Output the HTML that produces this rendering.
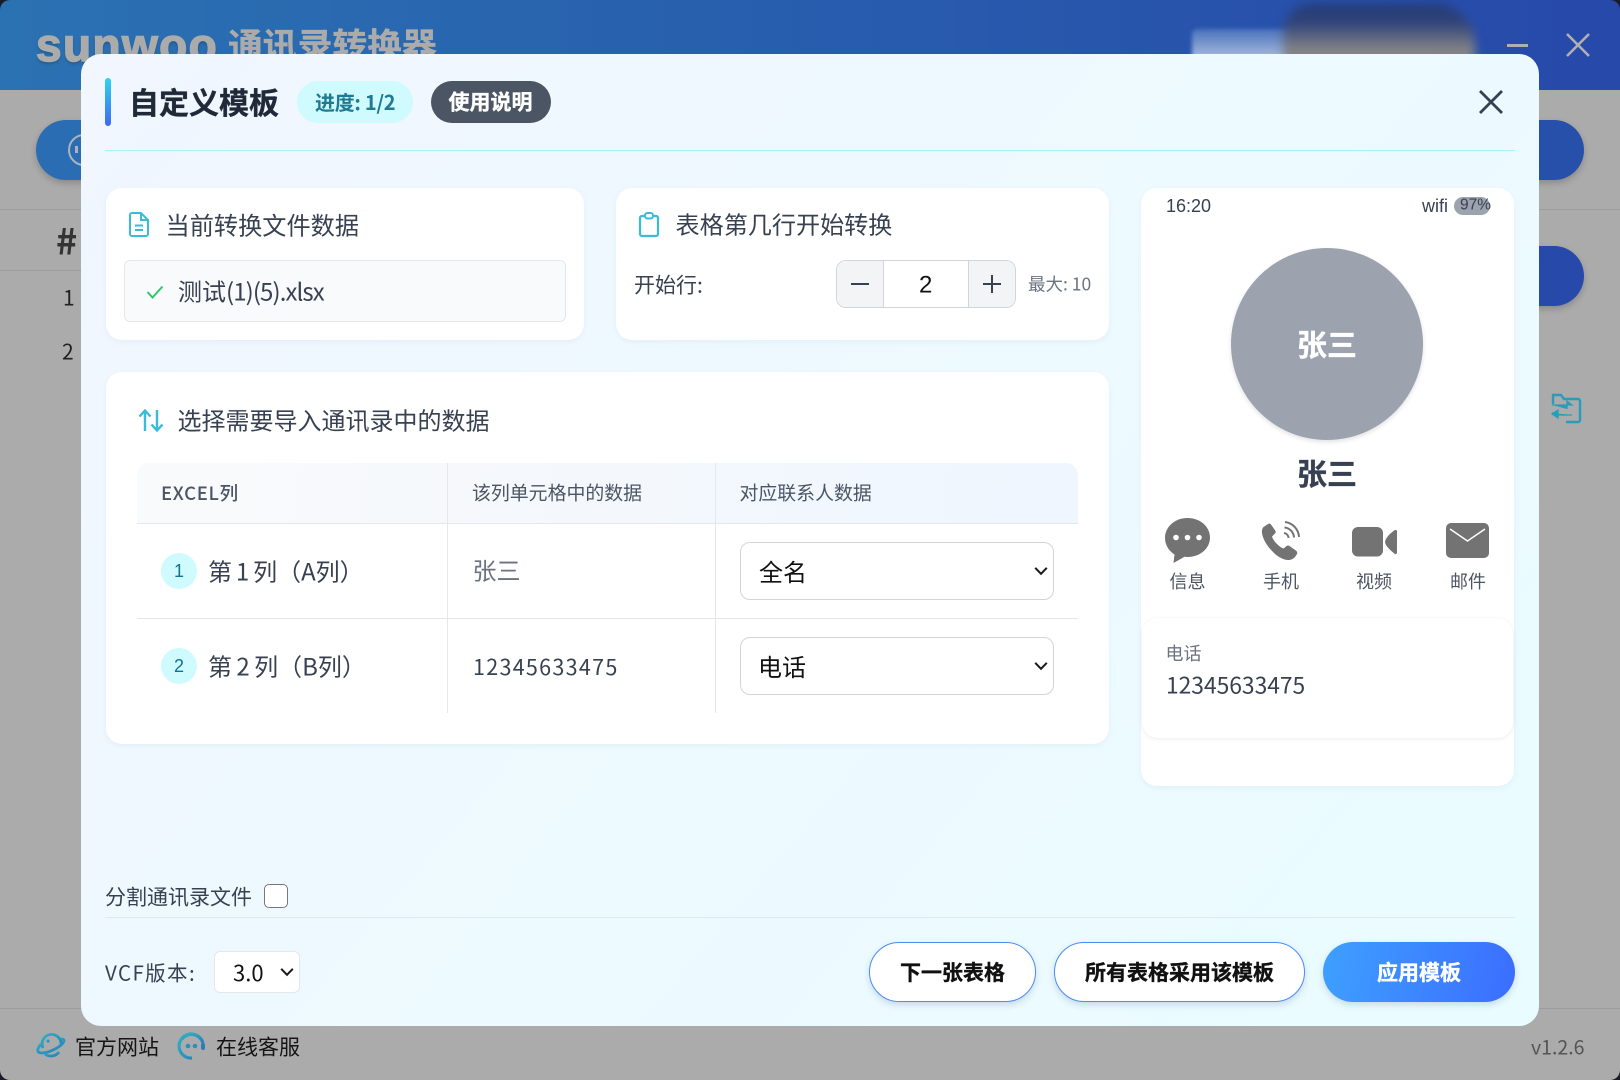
<!DOCTYPE html>
<html lang="zh-CN"><head><meta charset="utf-8"><title>自定义模板</title>
<style>
*{box-sizing:border-box}
html,body{margin:0;padding:0}
body{width:1620px;height:1080px;position:relative;overflow:hidden;background:#ababab;font-family:"Liberation Sans","Noto Sans CJK SC",sans-serif}
.t,.a{position:absolute}
.t{white-space:nowrap;font-family:"Noto Sans CJK SC","Liberation Sans",sans-serif;color:#374151;transform:translateY(-50%);line-height:1.2}
.b{-webkit-text-stroke:.35px currentColor}
.card{position:absolute;background:#fff;border-radius:16px;box-shadow:0 2px 6px rgba(100,130,170,.08)}
svg{position:absolute;overflow:visible}
select{position:absolute;-webkit-appearance:none;appearance:none;background:#fff;font-family:"Noto Sans CJK SC","Liberation Sans",sans-serif;color:#111;margin:0}
.btn{position:absolute;top:942px;height:60px;border-radius:30px;background:#fff;border:1px solid #4b8cf5;box-shadow:0 3px 7px rgba(60,90,130,.2);font:700 21px/58px "Noto Sans CJK SC",sans-serif;color:#111;text-align:center;-webkit-text-stroke:.35px currentColor}
.v{position:absolute;width:1px;background:#e5e7eb}
.h{position:absolute;height:1px;background:#e5e7eb}
.num{position:absolute;left:161px;width:36px;height:36px;border-radius:50%;background:#cffafe;color:#0e7490;font:18px/36px "Liberation Sans",sans-serif;text-align:center}
</style></head><body>

<!-- background app -->
<div class="a" style="left:0;top:0;width:1620px;height:90px;background:linear-gradient(90deg,#2b72b2,#285fae 45%,#2749aa)"></div>
<div class="t" style="left:36px;top:45px;font:800 46px/1 'Liberation Sans',sans-serif;color:#ababab;letter-spacing:1.400px;-webkit-text-stroke:1.500px #ababab;text-shadow:0 2px 3px rgba(0,0,0,.25)">sunwoo</div>
<div class="t b" style="left:228px;top:45px;font-size:34.800px;font-weight:700;color:#ababab">通讯录转换器</div>
<div class="a" style="left:1192px;top:29px;width:110px;height:34px;background:linear-gradient(180deg,#4a72bd,#b8c8e2);filter:blur(2px);border-radius:5px"></div>
<div class="a" style="left:1283px;top:4px;width:192px;height:62px;background:linear-gradient(180deg,#233a72,#30437a 30%,#858586 75%);filter:blur(5px);border-radius:30px 40px 5px 5px"></div>
<div class="a" style="left:1507px;top:44px;width:21px;height:2.5px;background:#b0b0b0"></div>
<svg style="left:1566px;top:33px" width="24" height="24" viewBox="0 0 24 24"><path d="M1 1 23 23M23 1 1 23" stroke="#b0b0b0" stroke-width="2.6" fill="none"/></svg>

<div class="a" style="left:36px;top:120px;width:120px;height:60px;border-radius:30px;background:#2a6db3;box-shadow:0 3px 7px rgba(0,0,0,.2)"></div>
<div class="a" style="left:68px;top:134px;width:32px;height:32px;border-radius:50%;border:2.5px solid #a9b4c0"></div>
<div class="a" style="left:75px;top:146px;width:3px;height:7px;background:#a9b4c0"></div>
<div class="a" style="left:1480px;top:120px;width:104px;height:60px;border-radius:30px;background:#2750ab;box-shadow:0 3px 7px rgba(0,0,0,.2)"></div>
<div class="a" style="left:1480px;top:246px;width:104px;height:60px;border-radius:30px;background:#2749aa;box-shadow:0 3px 7px rgba(0,0,0,.2)"></div>
<div class="a" style="left:0;top:209px;width:1620px;height:1px;background:#9c9c9c"></div>
<div class="a" style="left:0;top:270px;width:90px;height:1px;background:#9c9c9c"></div>
<div class="t" style="left:56px;top:240px;font-size:36px;font-weight:700;color:#333">#</div>
<div class="t" style="left:63px;top:298px;font-size:21px;color:#222">1</div>
<div class="t" style="left:62px;top:352px;font-size:21px;color:#222">2</div>
<svg style="left:1550px;top:393px" width="31" height="30" viewBox="0 0 31 30"><path d="M3 11V2h8l3 4h14a2 2 0 0 1 2 2v19a2 2 0 0 1-2 2H16" fill="none" stroke="#2c9ab8" stroke-width="2.4"/><path d="M2 12h20l-5-4v8M2 20h6v-3l-6 4 6 4v-3h14" fill="#2c9ab8" stroke="#2c9ab8" stroke-width="1.2"/></svg>
<div class="a" style="left:0;top:1008px;width:1620px;height:1px;background:#9c9c9c"></div>

<svg style="left:37px;top:1032px" width="30" height="28" viewBox="0 0 30 28"><defs><linearGradient id="g1" x1="0" y1="0" x2="1" y2="1"><stop offset="0" stop-color="#2fb2c4"/><stop offset="1" stop-color="#2a7db8"/></linearGradient></defs><path d="M6 16A9.5 9.5 0 1 1 24 13" fill="none" stroke="url(#g1)" stroke-width="2.8"/><path d="M4 12C-1 18 0 21 5 21c6 0 17-5 21-10 2-3 1-4-2-4" fill="none" stroke="url(#g1)" stroke-width="2.8"/><path d="M8 22a10 10 0 0 0 14-2" fill="none" stroke="url(#g1)" stroke-width="2.8"/><circle cx="11" cy="9" r="1.6" fill="url(#g1)"/></svg>
<div class="t" style="left:75px;top:1047px;font-size:21px;color:#151515">官方网站</div>
<svg style="left:178px;top:1032px" width="28" height="28" viewBox="0 0 28 28"><path d="M22 6A12 12 0 1 0 14 26" fill="none" stroke="url(#g1)" stroke-width="3.2"/><path d="M4 7A12 12 0 0 1 25 11" fill="none" stroke="url(#g1)" stroke-width="3.2"/><rect x="23" y="11" width="4" height="7" rx="2" fill="#2a7db8"/><circle cx="10" cy="14" r="2.300" fill="#2a8fbc"/><circle cx="17" cy="14" r="2.300" fill="#2a8fbc"/></svg>
<div class="t" style="left:216px;top:1047px;font-size:21px;color:#151515">在线客服</div>
<div class="t" style="left:1531px;top:1046px;font-size:19.500px;color:#555">v1.2.6</div>

<!-- window corners -->
<svg style="left:0;top:0" width="1620" height="1080" viewBox="0 0 1620 1080"><path d="M0 0H10A10 10 0 0 0 0 10ZM1620 0H1610A10 10 0 0 1 1620 10ZM0 1080H10A10 10 0 0 1 0 1070ZM1620 1080H1610A10 10 0 0 0 1620 1070Z" fill="#1c1c28"/></svg>

<!-- modal -->
<div class="a" style="left:81px;top:54px;width:1458px;height:972px;border-radius:20px;background:linear-gradient(130deg,#f1f6ff,#edfaff 55%,#e9fcff)"></div>

<div class="a" style="left:105px;top:78px;width:6px;height:48px;border-radius:3px;background:linear-gradient(180deg,#2fd4ee,#3f68f2)"></div>
<div class="t b" style="left:129px;top:101px;font-size:30px;font-weight:700;color:#1f2937">自定义模板</div>
<div class="a" style="left:297px;top:81px;width:116px;height:42px;border-radius:21px;background:#cffafe"></div>
<div class="t" style="left:315px;top:102px;font-size:20px;font-weight:700;color:#1f7a92;letter-spacing:-.3px">进度: 1/2</div>
<div class="a" style="left:431px;top:81px;width:120px;height:42px;border-radius:21px;background:#4b5563"></div>
<div class="t b" style="left:448.500px;top:102px;font-size:21px;font-weight:700;color:#fff">使用说明</div>
<svg style="left:1479px;top:90px" width="24" height="24" viewBox="0 0 24 24"><path d="M1 1 23 23M23 1 1 23" stroke="#374151" stroke-width="2.8" fill="none"/></svg>
<div class="a" style="left:105px;top:150px;width:1410px;height:1px;background:#a5f3fc"></div>

<!-- card 1 -->
<div class="card" style="left:106px;top:188px;width:478px;height:152px"></div>
<svg style="left:129px;top:212px" width="20" height="25" viewBox="0 0 20 25"><path d="M3 1h9l7 7v14a2 2 0 0 1-2 2H3a2 2 0 0 1-2-2V3a2 2 0 0 1 2-2Z" fill="none" stroke="#38bcd8" stroke-width="2"/><path d="M12 1v7h7M6 13.500h8M6 18h8" fill="none" stroke="#38bcd8" stroke-width="2"/></svg>
<div class="t" style="left:165.500px;top:224px;font-size:24.200px">当前转换文件数据</div>
<div class="a" style="left:124px;top:260px;width:442px;height:62px;background:#f9fafb;border:1px solid #e5e7eb;border-radius:6px"></div>
<svg style="left:146px;top:285px" width="18" height="14" viewBox="0 0 18 14"><path d="M1.500 7 6.500 12.500 16.500 1.500" fill="none" stroke="#2fc76a" stroke-width="2"/></svg>
<div class="t" style="left:178px;top:291px;font-size:24px">测试<span style="letter-spacing:-.9px">(1)(5).xlsx</span></div>

<!-- card 2 -->
<div class="card" style="left:616px;top:188px;width:493px;height:152px"></div>
<svg style="left:639px;top:212px" width="20" height="25" viewBox="0 0 20 25"><rect x="1" y="4" width="18" height="20" rx="2" fill="none" stroke="#38bcd8" stroke-width="2.2"/><rect x="6" y="1" width="8" height="5.500" rx="2.500" fill="#fff" stroke="#38bcd8" stroke-width="2"/></svg>
<div class="t" style="left:675.500px;top:224px;font-size:24.100px">表格第几行开始转换</div>
<div class="t" style="left:634px;top:285px;font-size:21px">开始行:</div>
<div class="a" style="left:836px;top:260px;width:180px;height:48px;border:1px solid #d1d5db;border-radius:10px;background:#fff;overflow:hidden">
<div class="a" style="left:0;top:0;width:47px;height:46px;background:#f3f4f6;border-right:1px solid #d1d5db"></div>
<div class="a" style="left:131px;top:0;width:47px;height:46px;background:#f3f4f6;border-left:1px solid #d1d5db"></div>
</div>
<div class="a" style="left:851px;top:283px;width:18px;height:2px;background:#374151"></div>
<div class="a" style="left:983px;top:283px;width:18px;height:2px;background:#374151"></div>
<div class="a" style="left:991px;top:275px;width:2px;height:18px;background:#374151"></div>
<div class="t" style="left:919px;top:286px;font:24px/1.2 'Liberation Sans',sans-serif;color:#111">2</div>
<div class="t" style="left:1028px;top:284px;font-size:17.500px;color:#6b7280">最大: 10</div>

<!-- table card -->
<div class="card" style="left:106px;top:372px;width:1003px;height:372px"></div>
<svg style="left:138px;top:409px" width="26" height="23" viewBox="0 0 26 23"><path d="M7 22V2M1.500 7.500 7 1.500l5.500 6M19 1v20M13.500 15.500 19 21.500l5.500-6" fill="none" stroke="#38bcd8" stroke-width="2.400"/></svg>
<div class="t" style="left:177.500px;top:420px;font-size:24px">选择需要导入通讯录中的数据</div>

<div class="a" style="left:137px;top:463px;width:941px;height:60px;border-radius:12px 12px 0 0;background:linear-gradient(100deg,#f9fafb,#eff6ff)"></div>
<div class="h" style="left:137px;top:523px;width:941px"></div>
<div class="h" style="left:137px;top:618px;width:941px"></div>
<div class="v" style="left:447px;top:463px;height:250px"></div>
<div class="v" style="left:715px;top:463px;height:250px"></div>
<div class="t" style="left:161px;top:493px;font-size:18.500px;font-weight:500;color:#4b5563;letter-spacing:.7px">EXCEL列</div>
<div class="t" style="left:472px;top:493px;font-size:18.900px;color:#4b5563">该列单元格中的数据</div>
<div class="t" style="left:739.500px;top:493px;font-size:18.900px;color:#4b5563">对应联系人数据</div>

<div class="num" style="top:553px">1</div>
<div class="t" style="left:208px;top:571px;font-size:24px;word-spacing:-1.500px">第 1 列（A列）</div>
<div class="t" style="left:472.500px;top:570px;font-size:24px;color:#6b7280">张三</div>
<select style="left:740px;top:542px;width:314px;height:58px;border:1px solid #d1d5db;border-radius:10px;font-size:24px;padding:0 0 0 18px;line-height:54px"><option>全名</option></select>
<svg style="left:1034px;top:566px" width="14" height="10" viewBox="0 0 14 10"><path d="M1.200 1.800 7 7.800 12.800 1.800" fill="none" stroke="#1a1a1a" stroke-width="2"/></svg>

<div class="num" style="top:648px">2</div>
<div class="t" style="left:208px;top:666px;font-size:24px;word-spacing:-1px">第 2 列（B列）</div>
<div class="t" style="left:473px;top:667px;font-size:21.500px;letter-spacing:1.300px">12345633475</div>
<select style="left:740px;top:637px;width:314px;height:58px;border:1px solid #d1d5db;border-radius:10px;font-size:24px;padding:0 0 0 17px;line-height:54px"><option>电话</option></select>
<svg style="left:1034px;top:661px" width="14" height="10" viewBox="0 0 14 10"><path d="M1.200 1.800 7 7.800 12.800 1.800" fill="none" stroke="#1a1a1a" stroke-width="2"/></svg>

<!-- preview -->
<div class="card" style="left:1141px;top:188px;width:373px;height:598px"></div>
<div class="t" style="left:1166px;top:207px;font:18px/1.2 'Liberation Sans',sans-serif;color:#374151">16:20</div>
<div class="t" style="left:1422px;top:207px;font:18px/1.2 'Liberation Sans',sans-serif;color:#374151">wifi</div>
<div class="a" style="left:1454px;top:197px;width:36px;height:18px;border-radius:9px;background:#9ca3af"></div>
<div class="t" style="left:1460px;top:206px;font:15.500px/1.2 'Liberation Sans',sans-serif;color:#374151">97%</div>
<div class="a" style="left:1231px;top:248px;width:192px;height:192px;border-radius:50%;background:#9ca3af;box-shadow:0 2px 5px rgba(0,0,0,.12)"></div>
<div class="t b" style="left:1327px;top:343px;font-size:30px;font-weight:700;color:#fff;transform:translate(-50%,-50%)">张三</div>
<div class="t b" style="left:1327px;top:472px;font-size:30px;font-weight:700;color:#374151;transform:translate(-50%,-50%)">张三</div>

<svg style="left:1165px;top:518px" width="45" height="45" viewBox="0 0 45 45"><path d="M22.500 0C10 0 0 8.800 0 20c0 7 4 13 9.500 16.500l-1 8.500 11-6.200c1 .1 2 .2 3 .2C35 39 45 30.500 45 19.500S35 0 22.500 0Z" fill="#737373"/><circle cx="11" cy="19.500" r="2.800" fill="#fff"/><circle cx="22.500" cy="19.500" r="2.800" fill="#fff"/><circle cx="34" cy="19.500" r="2.800" fill="#fff"/></svg>
<svg style="left:1262px;top:522px" width="38" height="38" viewBox="0 0 38 38"><path d="M6 2 1.500 5C-.5 7-.5 11 1 15c2 6 6 11 11 16 4 4 10 7 14 7 3 0 5-1 7-3l2-3c.5-1 .3-2-.5-3l-7-5c-1-.7-2-.6-3 0l-3 2.500c-3-1-5-3-7-5s-3.500-4-4.500-7l3-3c.8-.8.8-2 .2-3L9 2.500C8.200 1.500 7 1.300 6 2Z" fill="#737373"/><path d="M22 11a5 5 0 0 1 4.500 5M22.500 5.500A10.500 10.500 0 0 1 32 15.500M23 0a16 16 0 0 1 14 15" fill="none" stroke="#737373" stroke-width="2"/></svg>
<svg style="left:1352px;top:527px" width="45" height="30" viewBox="0 0 45 30"><rect x="0" y="0" width="31" height="29.500" rx="6" fill="#737373"/><path d="M45 4.500v21c0 1.500-1.500 2-2.500 1.200C38 23 33.500 19 33 15c.5-4 5-8.500 9.500-11.700 1-.8 2.500-.3 2.500 1.200Z" fill="#737373"/></svg>
<svg style="left:1446px;top:523px" width="43" height="35" viewBox="0 0 43 35"><rect x="0" y="0" width="43" height="35" rx="5" fill="#737373"/><path d="M4 6 21.500 18 39 6" fill="none" stroke="#fff" stroke-width="1.500"/></svg>
<div class="t" style="left:1187.500px;top:582px;font-size:18px;color:#4b5563;transform:translate(-50%,-50%)">信息</div>
<div class="t" style="left:1281px;top:582px;font-size:18px;color:#4b5563;transform:translate(-50%,-50%)">手机</div>
<div class="t" style="left:1374px;top:582px;font-size:18px;color:#4b5563;transform:translate(-50%,-50%)">视频</div>
<div class="t" style="left:1468px;top:582px;font-size:18px;color:#4b5563;transform:translate(-50%,-50%)">邮件</div>

<div class="a" style="left:1142px;top:618px;width:371px;height:120px;border-radius:16px;background:#fff;box-shadow:0 1px 4px rgba(0,0,0,.08)"></div>
<div class="t" style="left:1165.500px;top:654px;font-size:18px;color:#6b7280">电话</div>
<div class="t" style="left:1166px;top:684px;font-size:22.800px;color:#374151">12345633475</div>

<!-- bottom -->
<div class="t" style="left:105px;top:897px;font-size:21px">分割通讯录文件</div>
<input type="checkbox" class="a" style="left:264px;top:884px;width:24px;height:24px;margin:0;-webkit-appearance:none;appearance:none;background:#fff;border:1.500px solid #767676;border-radius:5px">
<div class="a" style="left:105px;top:917px;width:1410px;height:1px;background:#e5e7eb"></div>
<div class="t" style="left:105px;top:972px;font-size:20.500px;letter-spacing:1.400px">VCF版本:</div>
<select style="left:214px;top:951px;width:86px;height:42px;border:1px solid #e5e7eb;border-radius:6px;font-size:22px;padding:0 0 0 18px;line-height:40px"><option>3.0</option></select>
<svg style="left:280px;top:967px" width="14" height="10" viewBox="0 0 14 10"><path d="M1.200 1.800 7 7.800 12.800 1.800" fill="none" stroke="#1a1a1a" stroke-width="2"/></svg>

<div class="btn" style="left:869px;width:167px">下一张表格</div>
<div class="btn" style="left:1054px;width:251px">所有表格采用该模板</div>
<div class="btn" style="left:1323px;width:192px;border:0;line-height:60px;color:#fff;background:linear-gradient(100deg,#3ea0ff,#3b6dff)">应用模板</div>

</body></html>
